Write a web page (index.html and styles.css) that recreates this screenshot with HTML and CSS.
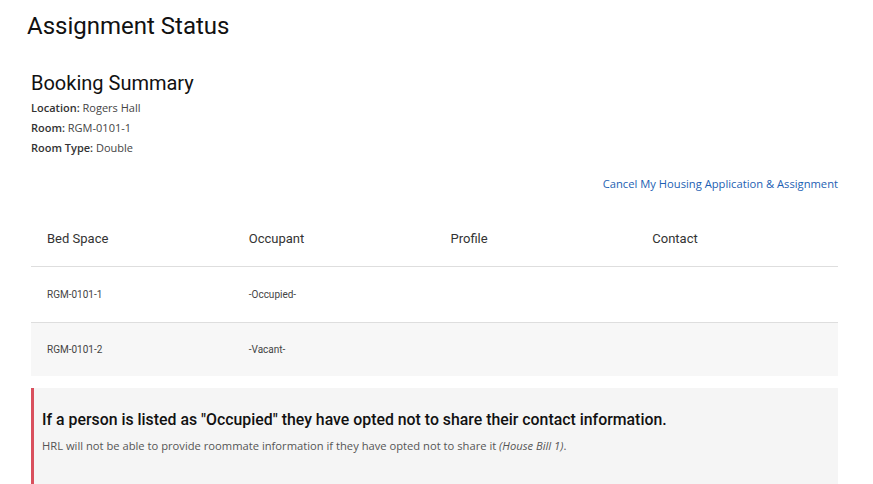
FILE: index.html
```html
<!DOCTYPE html>
<html>
<head>
<meta charset="utf-8">
<link rel="stylesheet" href="styles.css">
</head>
<body>
<h1 class="page-title">Assignment Status</h1>
<main class="content">
  <h2 class="section-title">Booking Summary</h2>
  <div class="summary">
    <div class="summary-line"><span class="label">Location:</span> Rogers Hall</div>
    <div class="summary-line"><span class="label">Room:</span> RGM-0101-1</div>
    <div class="summary-line"><span class="label">Room Type:</span> Double</div>
  </div>
  <div class="actions">
    <a class="cancel-link" href="#">Cancel My Housing Application &amp; Assignment</a>
  </div>
  <div class="table">
    <div class="row head">
      <div class="cell">Bed Space</div>
      <div class="cell">Occupant</div>
      <div class="cell">Profile</div>
      <div class="cell">Contact</div>
    </div>
    <div class="row body">
      <div class="cell">RGM-0101-1</div>
      <div class="cell">-Occupied-</div>
      <div class="cell"></div>
      <div class="cell"></div>
    </div>
    <div class="row body alt">
      <div class="cell">RGM-0101-2</div>
      <div class="cell">-Vacant-</div>
      <div class="cell"></div>
      <div class="cell"></div>
    </div>
  </div>
  <div class="callout">
    <h3 class="callout-title">If a person is listed as "Occupied" they have opted not to share their contact information.</h3>
    <p class="callout-text">HRL will not be able to provide roommate information if they have opted not to share it <em>(House Bill 1)</em>.</p>
  </div>
</main>
</body>
</html>
```
FILE: styles.css
```css
* { box-sizing: border-box; }
html, body { margin: 0; padding: 0; background: #fff; }
body {
  font-family: "Open Sans", "Liberation Sans", sans-serif;
  color: #333;
}
.page-title {
  font-family: Roboto, "Liberation Sans", sans-serif;
  font-weight: 400;
  font-size: 24px;
  line-height: 28px;
  margin: 12px 0 0 27px;
  color: #111;
}
.content {
  padding: 0 35px 0 31px;
}
.section-title {
  font-family: Roboto, "Liberation Sans", sans-serif;
  font-weight: 400;
  font-size: 20px;
  line-height: 24px;
  margin: 31px 0 3px 0;
  color: #111;
}
.summary-line {
  font-size: 11px;
  line-height: 20px;
  color: #444;
}
.label { font-weight: 600; color: #333; }
.actions {
  display: flex;
  justify-content: flex-end;
  margin-top: 16px;
}
.cancel-link {
  font-size: 11.2px;
  line-height: 20px;
  color: #1d5fb3;
  text-decoration: none;
}
.table {
  margin-top: 16px;
  font-family: Roboto, "Liberation Sans", sans-serif;
}
.row {
  display: grid;
  grid-template-columns: repeat(4, 1fr);
  align-items: center;
  border-bottom: 1px solid #dedede;
}
.row.head { height: 57px; }
.row.body { height: 56px; }
.row.alt { background: #f7f7f7; border-bottom: none; height: 53px; }
.cell { padding-left: 16px; }
.head .cell { font-size: 13px; color: #333; }
.body .cell { font-size: 10px; color: #444; }
.callout {
  margin-top: 12px;
  background: #f5f5f5;
  border-left: 3px solid #d9505d;
  padding: 20px 8px 30px 8px;
}
.callout-title {
  font-family: Roboto, "Liberation Sans", sans-serif;
  font-weight: 500;
  font-size: 15.85px;
  line-height: 24px;
  margin: 0;
  color: #111;
}
.callout-text {
  font-size: 11.2px;
  line-height: 16px;
  margin: 6px 0 0 0;
  color: #555;
}
.callout-text em { font-style: italic; }
```
